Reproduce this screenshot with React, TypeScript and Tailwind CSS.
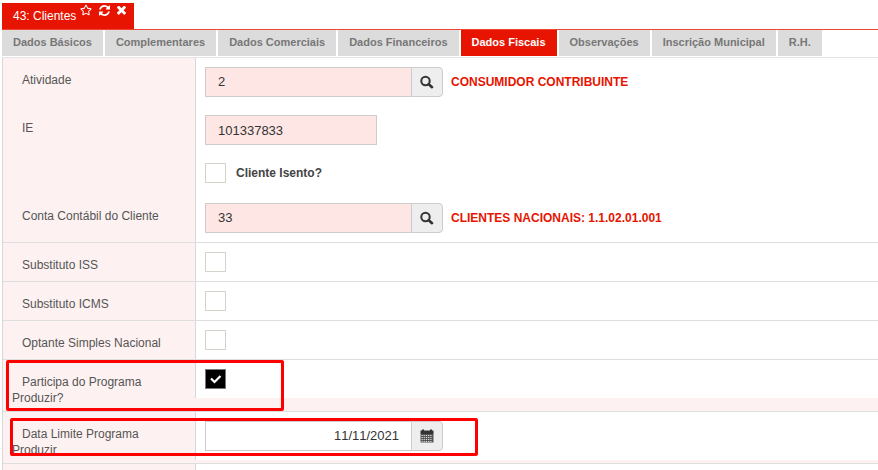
import React from 'react';
import { FaRegStar } from 'react-icons/fa';

const tabs = [
  'Dados Básicos',
  'Complementares',
  'Dados Comerciais',
  'Dados Financeiros',
  'Dados Fiscais',
  'Observações',
  'Inscrição Municipal',
  'R.H.',
];

const RefreshIcon = () => (
  <svg viewBox="0 0 1536 1536" className="size-[11px]" fill="currentColor" aria-hidden="true">
    <path d="M1511 928q0 5-1 7-64 268-268 434.5T764 1536q-146 0-282.500-55T238 1324l-129 129q-19 19-45 19t-45-19-19-45V960q0-26 19-45t45-19h448q26 0 45 19t19 45-19 45l-137 137q71 66 161 102t187 36q134 0 250-65t186-179q11-17 53-117 8-23 30-23h192q13 0 22.500 9.500t9.500 22.500zm25-800v448q0 26-19 45t-45 19h-448q-26 0-45-19t-19-45 19-45l138-138Q969 256 768 256q-134 0-250 65T332 500q-11 17-53 117-8 23-30 23H50q-13 0-22.500-9.500T18 608v-7q65-268 270-434.500T768 0q146 0 284 55.500T1297 212l130-129q19-19 45-19t45 19 19 45z" />
  </svg>
);

const CloseIcon = () => (
  <svg viewBox="110 314 1188 1120" className="size-[9px]" fill="currentColor" aria-hidden="true">
    <path d="M1298 1202q0 40-28 68l-136 136q-28 28-68 28t-68-28l-294-294-294 294q-28 28-68 28t-68-28l-136-136q-28-28-28-68t28-68l294-294-294-294q-28-28-28-68t28-68l136-136q28-28 68-28t68 28l294 294 294-294q28-28 68-28t68 28l136 136q28 28 28 68t-28 68l-294 294 294 294q28 28 28 68z" />
  </svg>
);

const SearchIcon = () => (
  <svg viewBox="0 0 14 14" className="size-[14px]" fill="none" stroke="currentColor" aria-hidden="true">
    <circle cx="5.500" cy="6" r="4.200" strokeWidth="2" />
    <path d="M8.800 9.200l3.200 3" strokeWidth="2.600" strokeLinecap="round" />
  </svg>
);

const CalendarIcon = () => (
  <svg viewBox="0 0 14 14" className="size-[14px]" aria-hidden="true">
    <path d="M2 .5h2v1h6v-1h2v1h1.500V5H.5V1.500H2z" fill="#333" />
    <path d="M.5 5h13v8.500H.5z" fill="#555" />
    <path d="M1.500 6.500h11M1.500 8.500h11M1.500 10.500h11M1.500 12.500h11" stroke="#ddd" strokeWidth="1" strokeDasharray="1.200 1" />
  </svg>
);

type RowProps = {
  label?: string;
  htmlFor?: string;
  line?: boolean;
  mark?: React.ReactNode;
  children?: React.ReactNode;
};

const Row = ({ label, htmlFor, line = true, mark, children }: RowProps) => (
  <div className={`relative flex items-start bg-[#fdf2f1] ${line ? 'border-b border-[#dedede]' : ''}`}>
    <div className="w-48 shrink-0 pt-[14px] pr-6 pb-[5px] pl-[9px] indent-[10px] leading-4">
      {label && <label htmlFor={htmlFor}>{label}</label>}
    </div>
    <div className="flex flex-1 items-center border-l border-[#d8d8d8] bg-white py-[9px] pl-[9px]">
      {children}
    </div>
    {mark}
  </div>
);

const Check = ({ id, checked = false }: { id: string; checked?: boolean }) => (
  <span className="relative h-5 w-[21px]">
    <input
      id={id}
      type="checkbox"
      defaultChecked={checked}
      className="peer block h-5 w-[21px] appearance-none border border-[#d3d3cc] bg-white checked:border-[#777] checked:bg-black"
    />
    <svg
      viewBox="0 0 21 20"
      className="pointer-events-none absolute inset-0 hidden h-5 w-[21px] peer-checked:block"
      fill="none"
      stroke="white"
      strokeWidth="2.200"
      aria-hidden="true"
    >
      <path d="M6 9.500l3.500 3.500 6-6" />
    </svg>
  </span>
);

type GroupProps = {
  id: string;
  value: string;
  action: string;
  icon: React.ReactNode;
  date?: boolean;
};

const InputGroup = ({ id, value, action, icon, date }: GroupProps) => (
  <div className="flex h-[30px] w-[238px]">
    <input
      id={id}
      type="text"
      defaultValue={value}
      className={`min-w-0 flex-1 border border-r-0 border-[#ccc] px-3 text-[13px] text-[#333] [font-kerning:none] ${
        date ? 'bg-white text-right' : 'bg-[#fde6e4]'
      }`}
    />
    <button
      type="button"
      aria-label={action}
      className="flex w-8 items-center justify-center rounded-r-sm border border-[#ccc] bg-[#eee] text-[#333]"
    >
      {icon}
    </button>
  </div>
);

export default function App() {
  return (
    <main className="h-screen overflow-hidden bg-white pt-[3px] pl-[2px] font-['Liberation_Sans',Arial,sans-serif] text-[12px] text-[#555]">
      <header className="bg-[#ee4632] pb-px">
        <div className="flex bg-white">
          <div className="flex h-[26px] w-[132px] bg-[#e61400] pl-[11px] text-white">
            <h1 className="pt-[5px] leading-4">43: Clientes</h1>
            <div className="flex h-[14px] items-center gap-[7px] pl-1">
              <button type="button" aria-label="Favorito">
                <FaRegStar className="size-3" />
              </button>
              <button type="button" aria-label="Atualizar">
                <RefreshIcon />
              </button>
              <button type="button" aria-label="Fechar">
                <CloseIcon />
              </button>
            </div>
          </div>
        </div>
      </header>

      <nav className="flex gap-0.5 border-b border-[#e4e4e4] pb-px">
        {tabs.map((tab) => (
          <a
            key={tab}
            href="#"
            className={`h-[26px] px-[11px] text-[11px] leading-[25px] font-bold whitespace-nowrap ${
              tab === 'Dados Fiscais' ? 'bg-[#e61400] text-white' : 'bg-[#dcdcdc] text-[#777]'
            }`}
          >
            {tab}
          </a>
        ))}
      </nav>

      <form className="border-l border-[#d8d8d8]">
        <Row label="Atividade" htmlFor="atividade" line={false}>
          <InputGroup id="atividade" value="2" action="Buscar atividade" icon={<SearchIcon />} />
          <strong className="pl-2 text-[#e61400]">CONSUMIDOR CONTRIBUINTE</strong>
        </Row>
        <Row label="IE" htmlFor="ie" line={false}>
          <input
            id="ie"
            type="text"
            defaultValue="101337833"
            className="h-[30px] w-[172px] border border-[#ccc] bg-[#fde6e4] px-3 text-[13px] text-[#333] [font-kerning:none]"
          />
        </Row>
        <Row line={false}>
          <div className="flex h-[22px] items-start">
            <Check id="isento" />
            <label htmlFor="isento" className="pl-[10px] leading-5 font-bold text-[#444]">
              Cliente Isento?
            </label>
          </div>
        </Row>
        <Row label="Conta Contábil do Cliente" htmlFor="conta">
          <InputGroup id="conta" value="33" action="Buscar conta" icon={<SearchIcon />} />
          <strong className="pl-2 text-[#e61400]">CLIENTES NACIONAIS: 1.1.02.01.001</strong>
        </Row>
        <Row label="Substituto ISS" htmlFor="iss">
          <Check id="iss" />
        </Row>
        <Row label="Substituto ICMS" htmlFor="icms">
          <Check id="icms" />
        </Row>
        <Row label="Optante Simples Nacional" htmlFor="simples">
          <Check id="simples" />
        </Row>
        <Row
          label="Participa do Programa Produzir?"
          htmlFor="produzir"
          mark={<div className="pointer-events-none absolute top-0 left-[3px] h-[51px] w-[278px] rounded-xs border-3 border-[#f00]" />}
        >
          <Check id="produzir" checked />
        </Row>
        <Row
          label="Data Limite Programa Produzir"
          htmlFor="limite"
          mark={<div className="pointer-events-none absolute top-[6px] left-[7px] h-[38px] w-[468px] rounded-xs border-3 border-[#f00]" />}
        >
          <InputGroup id="limite" value="11/11/2021" action="Abrir calendário" icon={<CalendarIcon />} date />
        </Row>
        <Row line={false} />
      </form>
    </main>
  );
}
